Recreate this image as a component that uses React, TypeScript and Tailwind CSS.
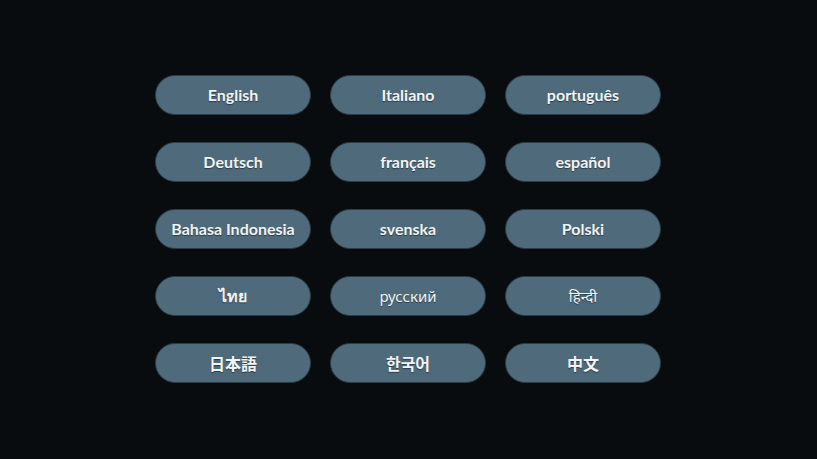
import React from "react";

const langs: { label: string; font: "latin" | "plain" | "cjk" | "thai" }[] = [
  { label: "English", font: "latin" },
  { label: "Italiano", font: "latin" },
  { label: "português", font: "latin" },
  { label: "Deutsch", font: "latin" },
  { label: "français", font: "latin" },
  { label: "español", font: "latin" },
  { label: "Bahasa Indonesia", font: "latin" },
  { label: "svenska", font: "latin" },
  { label: "Polski", font: "latin" },
  { label: "ไทย", font: "thai" },
  { label: "русский", font: "plain" },
  { label: "हिन्दी", font: "plain" },
  { label: "日本語", font: "cjk" },
  { label: "한국어", font: "cjk" },
  { label: "中文", font: "cjk" },
];

export default function App() {
  return (
    <div className="flex h-[459px] w-[817px] items-center justify-center bg-[#090c0f] pr-px pb-px">
      <div className="grid grid-cols-[156px_156px_156px] gap-x-[19px] gap-y-[27px]">
        {langs.map((l) => (
          <button
            key={l.label}
            className={
              "flex h-[40px] w-[156px] items-center justify-center rounded-full border border-[#2b3c48] bg-[#4f6b7b] text-[#f2f4f5] [text-shadow:0_1px_1px_rgba(0,0,0,0.45)] " +
              (l.font === "latin"
                ? "font-['Lato',sans-serif] text-[16px] font-bold"
                : l.font === "plain"
                ? "font-['Noto_Sans',sans-serif] text-[15px] font-normal"
                : l.font === "thai"
                ? "font-['Noto_Sans',sans-serif] text-[16px] font-semibold"
                : "font-['Noto_Sans_CJK_JP',sans-serif] text-[16px] font-bold")
            }
          >
            {l.label}
          </button>
        ))}
      </div>
    </div>
  );
}
